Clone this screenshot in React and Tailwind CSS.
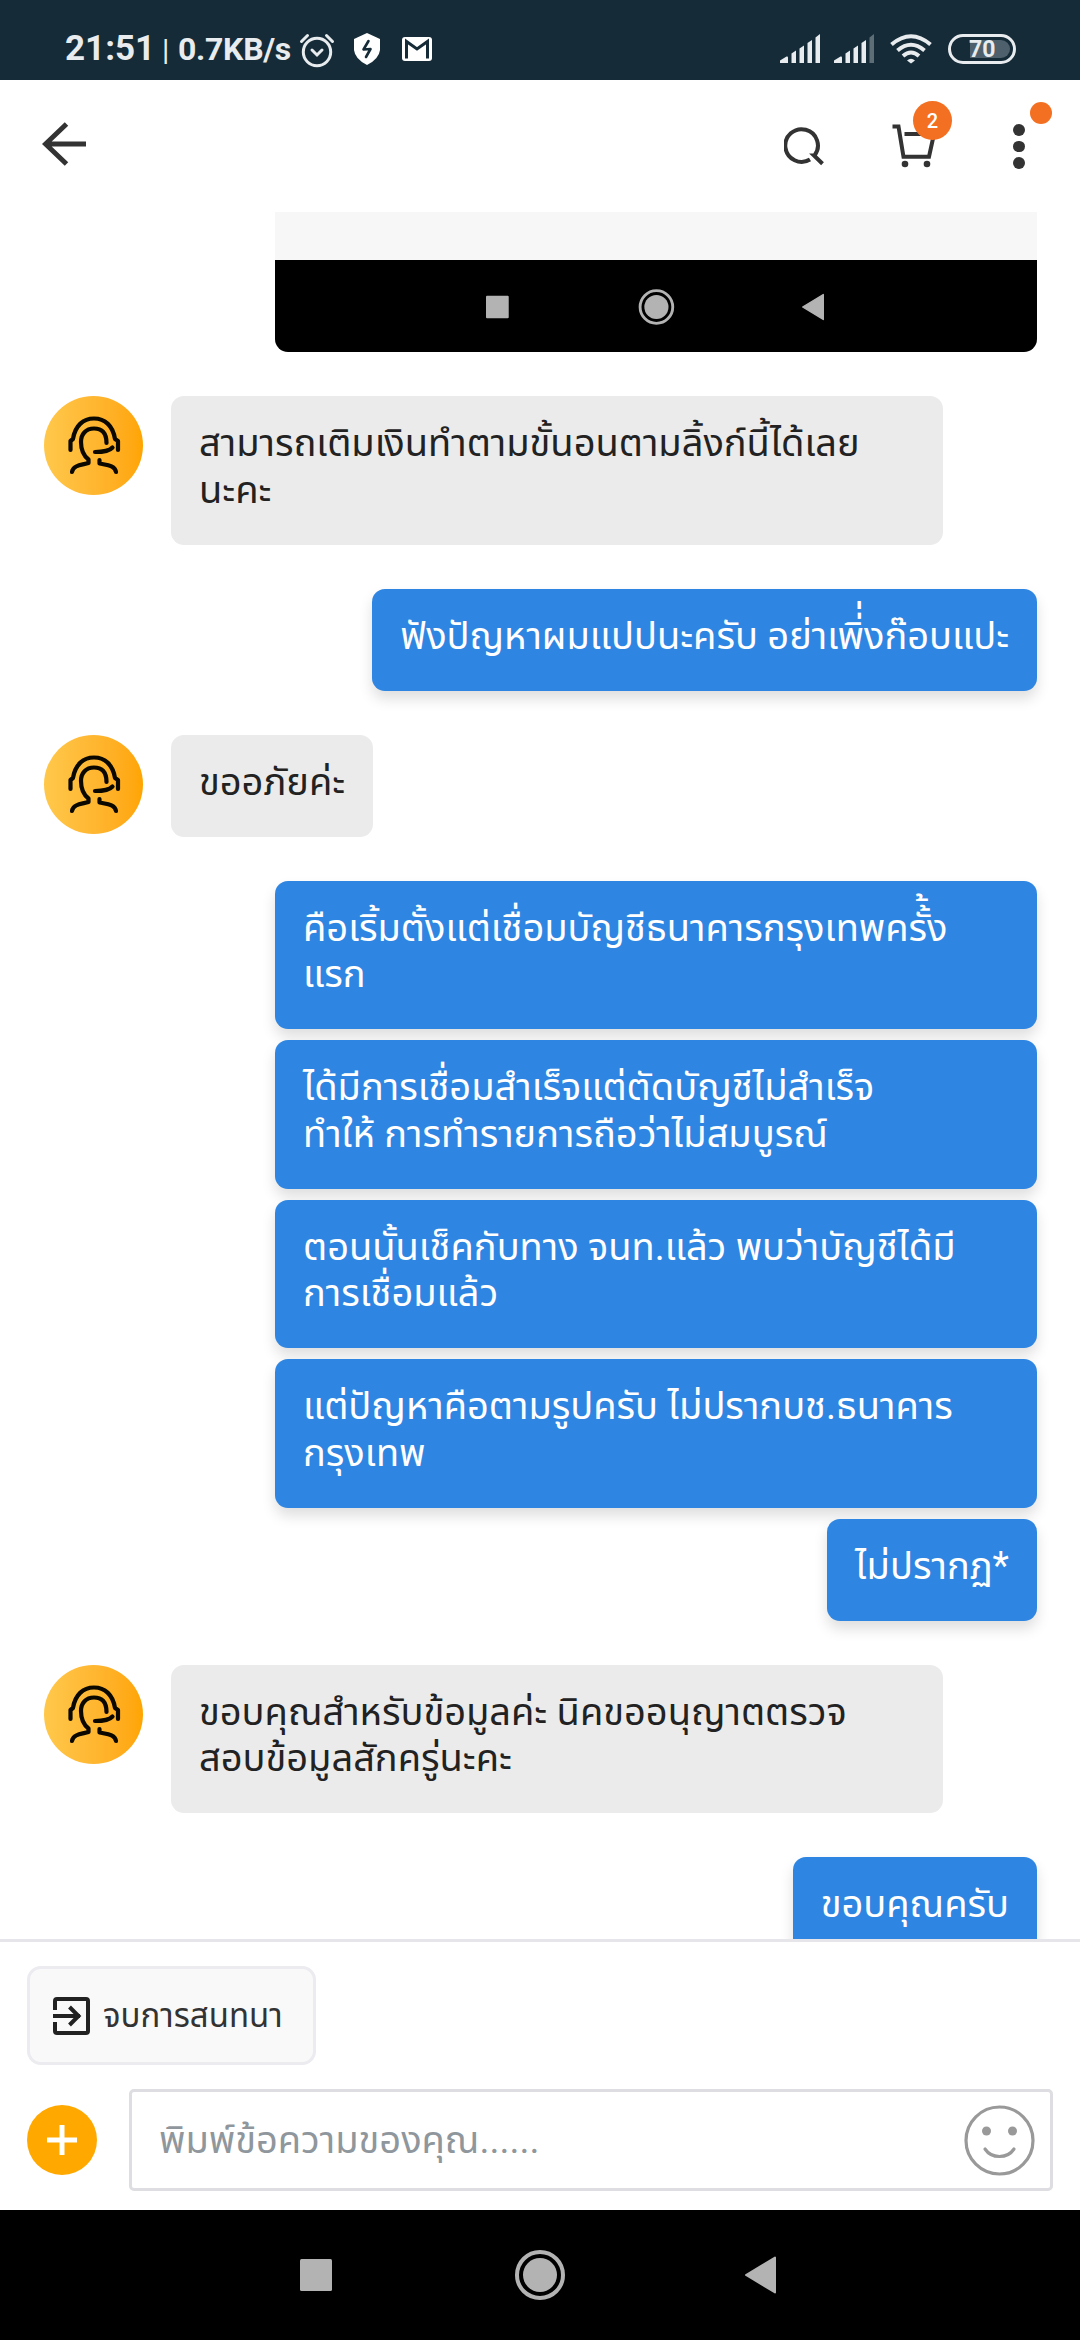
import React from "react";

const messages = [
  {
    from: "agent",
    box: "w-[772px] h-[148px]",
    bubbles: [["สามารถเติมเงินทำตามขั้นอนตามลิ้งก์นี้ได้เลย", "นะคะ"]],
  },
  { from: "me", bubbles: [["ฟังปัญหาผมแปปนะครับ อย่าเพิ่่งก๊อบแปะ"]] },
  { from: "agent", bubbles: [["ขออภัยค่ะ"]] },
  {
    from: "me",
    bubbles: [
      ["คือเริ้มตั้งแต่เชื่อมบัญชีธนาคารกรุงเทพครั้้ง", "แรก"],
      ["ได้มีการเชื่อมสำเร็จแต่ตัดบัญชีไม่สำเร็จ", "ทำให้ การทำรายการถือว่าไม่สมบูรณ์"],
      ["ตอนนั้นเช็คกับทาง จนท.แล้ว พบว่าบัญชีได้มี", "การเชื่อมแล้ว"],
      ["แต่ปัญหาคือตามรูปครับ ไม่ปรากบช.ธนาคาร", "กรุงเทพ"],
      ["ไม่ปรากฏ*"],
    ],
  },
  {
    from: "agent",
    bubbles: [["ขอบคุณสำหรับข้อมูลค่ะ นิคขออนุญาตตรวจ", "สอบข้อมูลสักครู่นะคะ"]],
  },
  { from: "me", bubbles: [["ขอบคุณครับ"]] },
];

function Signal({ weak }) {
  return (
    <svg width="40" height="30" viewBox="0 0 40 30" fill="#e8ecee">
      <path d="M0 29V26.500L6.500 22.500Q8 22 8 23.500V29Z" />
      <path d="M11.500 29V19.500L16 16.500V29Z" />
      <path d="M19.500 29V14.500L24 11.500V29Z" />
      <path d="M27.500 29V9L32 6V29Z" />
      <path d="M35.500 29V3.500L40 0V29Z" opacity={weak ? 0.35 : 1} />
    </svg>
  );
}

function StatusBar() {
  return (
    <div className="flex h-20 shrink-0 items-start bg-[#152b38] text-[#e8ecee]">
      <div className="flex h-[42px] mt-[28px] ml-[65px] w-[228px] items-baseline whitespace-nowrap font-bold">
        <span className="w-[97px] text-[35px] leading-[42px]">21:51</span>
        <span className="w-[16px] text-[30px] leading-[42px] font-normal">|</span>
        <span className="text-[32px] leading-[42px] tracking-[-0.3px]">0.7KB/s</span>
      </div>
      <svg className="mt-[32px] ml-[6px]" width="36" height="36" viewBox="0 0 36 36" fill="none" stroke="#e8ecee" strokeWidth="3" strokeLinecap="round">
        <circle cx="18" cy="20" r="13.700" />
        <path d="M13 18l5 5 5-5M2.500 9.500l6-6M33.500 9.500l-6-6" />
      </svg>
      <svg className="mt-[33px] ml-[18px]" width="28" height="32" viewBox="0 0 28 32">
        <path d="M14 0L27 6V17Q26 26 14 32Q2 26 1 17V6Z" fill="#fff" />
        <path d="M15.500 8L10.500 16.500L17.500 16L13 24" fill="none" stroke="#152b38" strokeWidth="2.600" strokeLinejoin="round" strokeLinecap="round" />
      </svg>
      <svg className="mt-[37px] ml-[21px]" width="30" height="24" viewBox="0 0 30 24">
        <rect width="30" height="24" rx="3" fill="#fff" />
        <path d="M4.500 21.500V4.500L15 12L25.500 4.500V21.500" fill="none" stroke="#152b38" strokeWidth="3" />
      </svg>
      <div className="ml-auto mr-[64px] mt-[34px] flex">
        <Signal />
        <div className="ml-[14px]">
          <Signal weak />
        </div>
        <svg className="ml-4" width="42" height="30" viewBox="0 0 42 30" fill="none" stroke="#e8ecee" strokeWidth="4">
          <path d="M1.500 10.500Q21 -6 40.500 10.500" />
          <path d="M7.500 16.500Q21 5 34.500 16.500" />
          <path d="M13 22Q21 15 29 22" />
          <path d="M17 26.500Q21 23 25 26.500L21 29.500Z" fill="#e8ecee" stroke="none" />
        </svg>
        <div className="relative ml-4 h-[30px] w-[68px] rounded-full border-[3px] border-[#e8ecee]">
          <div className="absolute left-[19px] top-[3px] h-[18px] w-[40px] rounded-r-full bg-[#4e606b]" />
          <div className="absolute left-[18px] top-0 text-[23px] leading-[25px] font-bold">70</div>
        </div>
      </div>
    </div>
  );
}

function Header() {
  return (
    <div className="flex h-[132px] shrink-0 items-start">
      <svg className="ml-[42px] mt-[42px]" width="45" height="44" viewBox="0 0 45 44" fill="none" stroke="#333" strokeWidth="5">
        <path d="M24.500 2L3.500 22L24.500 42M4 22H44" />
      </svg>
      <svg className="ml-[697px] mt-[46px]" width="40" height="40" viewBox="0 0 40 40" fill="none" stroke="#333" strokeWidth="4">
        <path d="M26 33.500A16.300 16.300 0 1 1 30.500 29.500L30 29.500L38.500 37.800" />
      </svg>
      <div className="relative ml-[68px] mt-[44px]">
        <svg width="44" height="44" viewBox="0 0 44 44" fill="none" stroke="#333" strokeWidth="4">
          <path d="M0.500 2.500H6.500L11.500 32.800H37L42 10H12.500" />
          <circle cx="13" cy="40" r="3.300" fill="#333" stroke="none" />
          <circle cx="35" cy="40" r="3.300" fill="#333" stroke="none" />
        </svg>
        <div className="absolute left-[21px] top-[-23px] flex size-[39px] items-center justify-center rounded-full bg-[#f37022] text-[20px] font-medium text-white">
          2
        </div>
      </div>
      <div className="relative ml-[77px] mt-[44px] flex w-3 flex-col gap-[5px]">
        <i className="size-[11.5px] rounded-full bg-[#333]" />
        <i className="size-[11.5px] rounded-full bg-[#333]" />
        <i className="size-[11.5px] rounded-full bg-[#333]" />
        <i className="absolute left-[17px] top-[-22px] size-[22px] rounded-full bg-[#f37022]" />
      </div>
    </div>
  );
}

function Avatar() {
  return (
    <div className="mr-[28px] size-[99px] shrink-0 rounded-full bg-gradient-to-r from-[#ffc84a] to-[#ffa500]">
      <svg width="99" height="99" viewBox="0 0 99 99" fill="none" stroke="#0b0800" strokeWidth="4.200" strokeLinecap="round" strokeLinejoin="round">
        <path d="M26.500 54V45L29 43C31 30 39 22.500 50 22.500S69 30 71 43L74 45V54" />
        <path d="M62.500 47C62.500 37 58 32.500 50 32.500C42 32.500 37 38 37 46C37 55 40 60 44.500 63.500V67C38 69 29 69 28 76" />
        <path d="M51 56C59 56 65 55.500 68.500 51.500M55.500 64V67.500C62 69 71 69 72 76" />
      </svg>
    </div>
  );
}

function Bubble({ lines, mine }) {
  const look = mine
    ? "bg-[#2e86e2] text-white shadow-[0_8px_14px_rgba(0,0,0,0.13)]"
    : "bg-[#ebebeb] text-[#222]";
  return (
    <div className={`rounded-[13px] px-[28px] pt-[24px] text-[38px] leading-[46.5px] whitespace-nowrap ${look} ${lines.length > 1 ? "h-[148.5px]" : "h-[102px]"} ${lines.length > 1 ? (mine ? "w-[762px]" : "w-[772px]") : ""}`}>
      {lines.map((line) => (
        <div key={line} className="h-[46.5px]">{line}</div>
      ))}
    </div>
  );
}

// same three buttons, drawn at two sizes
function NavButtons({ className }) {
  return (
    <svg className={className} viewBox="0 0 476 50" fill="#b3b3b3">
      <rect x="0" y="9" width="32" height="32" rx="1.500" />
      <circle cx="240" cy="25" r="23" fill="none" stroke="#b3b3b3" strokeWidth="4" />
      <circle cx="240" cy="25" r="17" />
      <path d="M446 25L475 7.500V42.500Z" stroke="#b3b3b3" strokeWidth="2" strokeLinejoin="round" />
    </svg>
  );
}

function Composer() {
  return (
    <div className="h-[271px] shrink-0 border-t-[3px] border-[#e5e5ea] bg-white">
      <div className="ml-[27px] mt-[24px] flex h-[99px] w-[289px] items-center rounded-[14px] border-[3px] border-[#ebebf0] bg-[#f9f9f9] pl-[23px] text-[#333]">
        <svg width="38" height="38" viewBox="0 0 38 38" fill="none" stroke="#222" strokeWidth="4">
          <path d="M2 13V4Q2 2 4 2H33Q35 2 35 4V34Q35 36 33 36H4Q2 36 2 34V25M0 19H27" />
          <path d="M16.500 10L25.500 19L16.500 28" />
        </svg>
        <span className="ml-[12px] text-[33px] leading-[46px] whitespace-nowrap">จบการสนทนา</span>
      </div>
      <div className="mt-[24px] flex items-center pl-[27px]">
        <div className="flex size-[70px] items-center justify-center rounded-full bg-[#ffa800]">
          <svg width="30" height="30" viewBox="0 0 30 30" stroke="#fff" strokeWidth="5">
            <path d="M15 0V30M0 15H30" />
          </svg>
        </div>
        <div className="ml-[32px] flex h-[102px] w-[924px] items-center rounded-[5px] border-[3px] border-[#dddde2] pl-[27px]">
          <span className="text-[38px] leading-[46px] whitespace-nowrap text-[#8f979d]">พิมพ์ข้อความของคุณ......</span>
          <svg className="ml-auto mr-[15px]" width="71" height="71" viewBox="0 0 71 71" fill="none" stroke="#999" strokeWidth="3.200">
            <circle cx="35.500" cy="35.500" r="33.500" />
            <circle cx="22.500" cy="26" r="4.500" fill="#999" stroke="none" />
            <circle cx="48.500" cy="26" r="4.500" fill="#999" stroke="none" />
            <path d="M21 44Q26 51.500 35.500 51.500T50 44" strokeLinecap="round" />
          </svg>
        </div>
      </div>
    </div>
  );
}

export default function App() {
  return (
    <div className="flex h-[2340px] w-[1080px] flex-col overflow-hidden bg-white font-[Roboto,'Noto_Sans_Thai','Noto_Sans',sans-serif]">
      <StatusBar />
      <Header />
      <div className="flex h-[1727px] shrink-0 flex-col gap-[44px] overflow-hidden pl-[44px] pr-[43px]">
        <div className="ml-auto h-[140px] w-[762px] shrink-0 overflow-hidden rounded-b-[13px] bg-black">
          <div className="h-[48px] bg-[#f7f7f7]" />
          <NavButtons className="ml-[211px] mt-[29px] h-[36px] w-[338px]" />
        </div>
        {messages.map((msg, i) =>
          msg.from === "me" ? (
            <div key={i} className="flex shrink-0 flex-col items-end gap-[11px]">
              {msg.bubbles.map((lines) => (
                <Bubble key={lines[0]} lines={lines} mine />
              ))}
            </div>
          ) : (
            <div key={i} className="flex shrink-0 items-start">
              <Avatar />
              <Bubble lines={msg.bubbles[0]} />
            </div>
          )
        )}
      </div>
      <Composer />
      <div className="flex h-[130px] shrink-0 items-center bg-black">
        <NavButtons className="ml-[300px] h-[50px] w-[476px]" />
      </div>
    </div>
  );
}
